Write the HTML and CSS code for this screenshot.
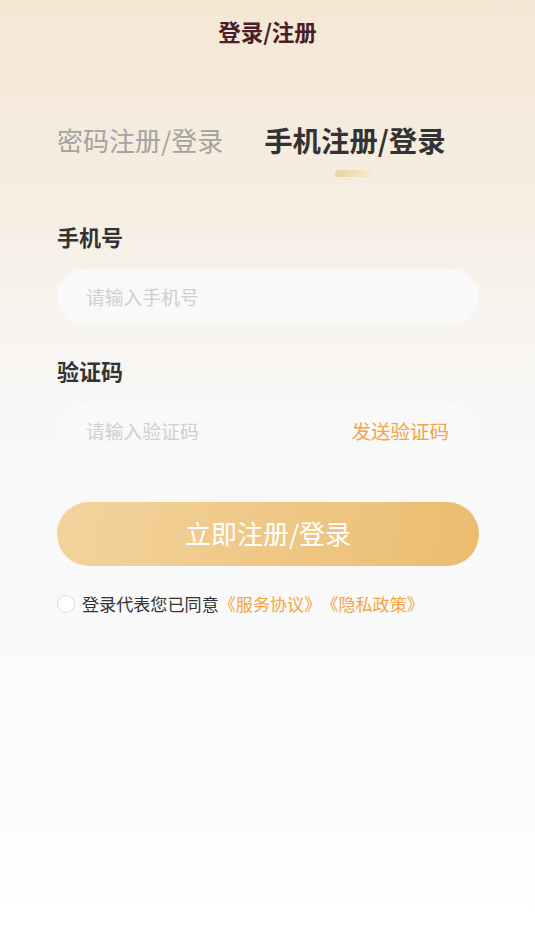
FILE: index.html
```html
<!DOCTYPE html>
<html lang="zh-CN">
<head>
<meta charset="utf-8">
<title>登录/注册</title>
<link rel="stylesheet" href="styles.css">
</head>
<body>
<div class="page">
  <header class="header">登录/注册</header>
  <div class="tabs">
    <div class="tab">密码注册/登录</div>
    <div class="tab tab-active">
      <span>手机注册/登录</span>
      <i class="indicator"></i>
    </div>
  </div>
  <div class="form">
    <div class="label">手机号</div>
    <div class="field"><span class="placeholder">请输入手机号</span></div>
    <div class="label label-2">验证码</div>
    <div class="field"><span class="placeholder">请输入验证码</span><span class="send">发送验证码</span></div>
    <div class="btn">立即注册/登录</div>
    <div class="agree">
      <span class="check"></span>
      <span class="agree-text">登录代表您已同意<span class="link">《服务协议》《隐私政策》</span></span>
    </div>
  </div>
</div>
</body>
</html>
```

FILE: styles.css
```css
* { box-sizing: border-box; margin: 0; padding: 0; }
html, body { width: 535px; height: 951px; }
body {
  font-family: "Noto Sans CJK SC", "Noto Sans", sans-serif;
  background: #fff;
  text-spacing-trim: space-all;
}
.page {
  height: 951px;
  background: linear-gradient(180deg, #f5e7d4 0%, #f6eee3 22%, #f8f6f3 38%, #f8f8f8 48%, #fafafa 68%, #fcfcfc 86%, #ffffff 96%);
}
.header {
  height: 62px;
  line-height: 62px;
  text-align: center;
  font-size: 22.5px;
  font-weight: 700;
  color: #4a1e27;
}
.tabs {
  display: flex;
  align-items: flex-start;
  gap: 41px;
  padding: 58px 0 0 57px;
}
.tab {
  font-size: 26px;
  line-height: 40px;
  color: #a3a3a3;
  white-space: nowrap;
}
.tab-active {
  display: flex;
  flex-direction: column;
  align-items: center;
  font-size: 28.4px;
  font-weight: 700;
  color: #333;
}
.indicator {
  display: block;
  width: 40px;
  height: 7px;
  margin-top: 10px;
  border-radius: 4px;
  background: linear-gradient(90deg, #ebd4a3 0%, #f0dfbb 55%, rgba(245, 235, 220, 0) 100%);
}
.form {
  padding: 44px 56px 0 57px;
}
.label {
  font-size: 22px;
  line-height: 30px;
  font-weight: 700;
  color: #333;
  margin-bottom: 18px;
}
.label-2 { margin-top: 30px; }
.field {
  height: 56px;
  border-radius: 28px;
  background: #f9f9f9;
  display: flex;
  align-items: center;
  justify-content: space-between;
  padding: 0 30px 2px 29px;
}
.placeholder {
  font-size: 18.8px;
  color: #cfcfcf;
}
.send {
  font-size: 19.5px;
  color: #f2a446;
}
.btn {
  margin-top: 43px;
  height: 64px;
  border-radius: 32px;
  background: linear-gradient(100deg, #f3d39d 0%, #efc887 50%, #ebbc6f 100%);
  color: #fff;
  font-size: 26px;
  display: flex;
  align-items: center;
  justify-content: center;
  padding-bottom: 4px;
}
.agree {
  margin-top: 28px;
  display: flex;
  align-items: center;
  gap: 7px;
  line-height: 20px;
}
.check {
  width: 18px;
  height: 18px;
  border-radius: 50%;
  border: 1px solid #dcdcdc;
  background: #fff;
  flex: none;
}
.agree-text {
  font-size: 17.1px;
  color: #333;
  white-space: nowrap;
}
.link { color: #f2a446; }
```
